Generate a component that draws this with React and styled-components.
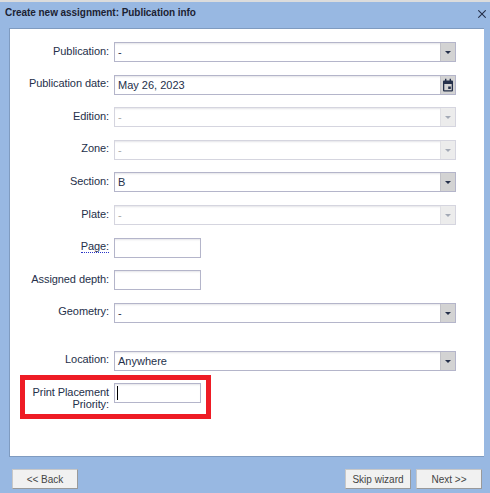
import React from 'react';
import styled, {createGlobalStyle} from 'styled-components';

const Global = createGlobalStyle`
  html, body { margin: 0; padding: 0; }
  body {
    width: 490px;
    height: 493px;
    overflow: hidden;
    background: #98b8e2;
    font-family: "Liberation Sans", Arial, sans-serif;
    font-size: 11px;
  }
`;

const Dialog = styled.div`
  width: 490px;
  height: 493px;
  display: flex;
  flex-direction: column;
  background: #98b8e2;
  border-top: 2px solid #dcdcdc;
  box-sizing: border-box;
`;

const TitleBar = styled.div`
  height: 26px;
  flex: none;
  display: flex;
  align-items: center;
  justify-content: space-between;
  padding: 0 4px 6px 5px;
  box-sizing: border-box;
  font-size: 10px;
  font-weight: bold;
  letter-spacing: -0.05px;
  color: #1c2233;
`;

const Close = styled.svg`
  width: 8px;
  height: 8px;
  margin-top: 3px;
`;

const Panel = styled.div`
  margin: 0 6px 0 9px;
  height: 429px;
  flex: none;
  box-sizing: border-box;
  background: #fff;
  border: 1px solid #7f9bc0;
  border-right: none;
  padding-top: 13px;
`;

const Row = styled.div`
  position: relative;
  display: flex;
  height: 20px;
  margin-bottom: ${p => p.$after}px;
`;

const Label = styled.label`
  width: 99px;
  margin-right: 5px;
  flex: none;
  text-align: right;
  font-size: 11px;
  line-height: 12px;
  letter-spacing: -0.08px;
  padding-top: ${p => p.$top}px;
  color: #25304a;
`;

const Dotted = styled.span`
  border-bottom: 1px dotted #2a35c8;
`;

const Control = styled.div`
  display: flex;
  box-sizing: border-box;
  height: 20px;
  width: ${p => p.$width}px;
  background: #fff;
  border: 1px solid ${p => (p.$off ? '#d5d5df' : '#b4b5ca')};
  box-shadow: inset 0 2px 2px -1px #e4e4e8;
`;

const Value = styled.div`
  flex: 1;
  padding: 2px 3px 0 3px;
  font-size: 11px;
  line-height: 14px;
  color: ${p => (p.$off ? '#a8a8a8' : '#25304a')};
`;

const Addon = styled.div`
  width: 14px;
  flex: none;
  display: flex;
  align-items: center;
  justify-content: center;
  background: ${p => (p.$off ? '#ececec' : '#d3d3d3')};
  border-left: 1px solid ${p => (p.$off ? '#e0e0e4' : '#c2c2c8')};
`;

const Caret = styled.div`
  width: 0;
  height: 0;
  margin-top: 1px;
  border-left: 3px solid transparent;
  border-right: 3px solid transparent;
  border-top: 3px solid ${p => (p.$off ? '#a3a9b5' : '#25304a')};
`;

const Cursor = styled.div`
  width: 1px;
  height: 14px;
  margin: 2px 0 0 2px;
  background: #000;
`;

const Highlight = styled.div`
  position: absolute;
  left: 10px;
  top: -8px;
  width: 191px;
  height: 44px;
  box-sizing: border-box;
  border: 5px solid #ee1c25;
  pointer-events: none;
`;

const Footer = styled.div`
  flex: 1;
  display: flex;
  align-items: flex-start;
  padding: 12px 8px 0 12px;
  gap: 5px;
`;

const Spacer = styled.div`
  flex: 1;
`;

const Button = styled.button`
  width: 66px;
  height: 20px;
  padding: 0;
  box-sizing: border-box;
  background: #f1f1f1;
  border: 1px solid #c8c8c8;
  border-right-color: #9a9a9a;
  border-bottom-color: #9a9a9a;
  font-family: inherit;
  font-size: 10px;
  color: #444;
`;

const Select = ({value, off}) => (
  <Control $width={342} $off={off}>
    <Value $off={off}>{value}</Value>
    <Addon $off={off}><Caret $off={off} /></Addon>
  </Control>
);

const fields = [
  {label: 'Publication:', value: '-', after: 13, top: 3},
  {label: 'Publication date:', date: true, after: 12, top: 2},
  {label: 'Edition:', value: '-', off: true, after: 13, top: 3},
  {label: 'Zone:', value: '-', off: true, after: 12, top: 2},
  {label: 'Section:', value: 'B', after: 13, top: 3},
  {label: 'Plate:', value: '-', off: true, after: 13, top: 3},
];

const App = () => (
  <Dialog>
    <Global />
    <TitleBar>
      Create new assignment: Publication info
      <Close viewBox="0 0 8 8">
        <path d="M0.3 0.3 L7.7 7.7 M7.7 0.3 L0.3 7.7" stroke="#25304a" strokeWidth="1.1" fill="none" />
      </Close>
    </TitleBar>
    <Panel>
      {fields.map(f => (
        <Row key={f.label} $after={f.after}>
          <Label $top={f.top}>{f.label}</Label>
          {f.date ? (
            <Control $width={342}>
              <Value>May 26, 2023</Value>
              <Addon>
                <svg width="12" height="14" viewBox="0 0 12 14">
                  <path d="M1 3.5 a1 1 0 0 1 1-1 h8 a1 1 0 0 1 1 1 v9 a1 1 0 0 1-1 1 h-8 a1 1 0 0 1-1-1 z M2.3 6 v6.2 h7.4 v-6.2 z" fill="#25304a" fillRule="evenodd" />
                  <path d="M3 0.8 h1.4 v2.4 h-1.4 z M7.6 0.8 h1.4 v2.4 h-1.4 z M6.2 8.5 h2.6 v2.5 h-2.6 z" fill="#25304a" />
                </svg>
              </Addon>
            </Control>
          ) : (
            <Select value={f.value} off={f.off} />
          )}
        </Row>
      ))}
      <Row $after={12}>
        <Label $top={2}><Dotted>Page:</Dotted></Label>
        <Control $width={87} />
      </Row>
      <Row $after={13}>
        <Label $top={3}>Assigned depth:</Label>
        <Control $width={87} />
      </Row>
      <Row $after={28}>
        <Label $top={2}>Geometry:</Label>
        <Select value="-" />
      </Row>
      <Row $after={12}>
        <Label $top={2}>Location:</Label>
        <Select value="Anywhere" />
      </Row>
      <Row $after={0}>
        <Label $top={3}>Print Placement Priority:</Label>
        <Control $width={87}><Cursor /></Control>
        <Highlight />
      </Row>
    </Panel>
    <Footer>
      <Button>&lt;&lt; Back</Button>
      <Spacer />
      <Button>Skip wizard</Button>
      <Button>Next &gt;&gt;</Button>
    </Footer>
  </Dialog>
);

export default App;
